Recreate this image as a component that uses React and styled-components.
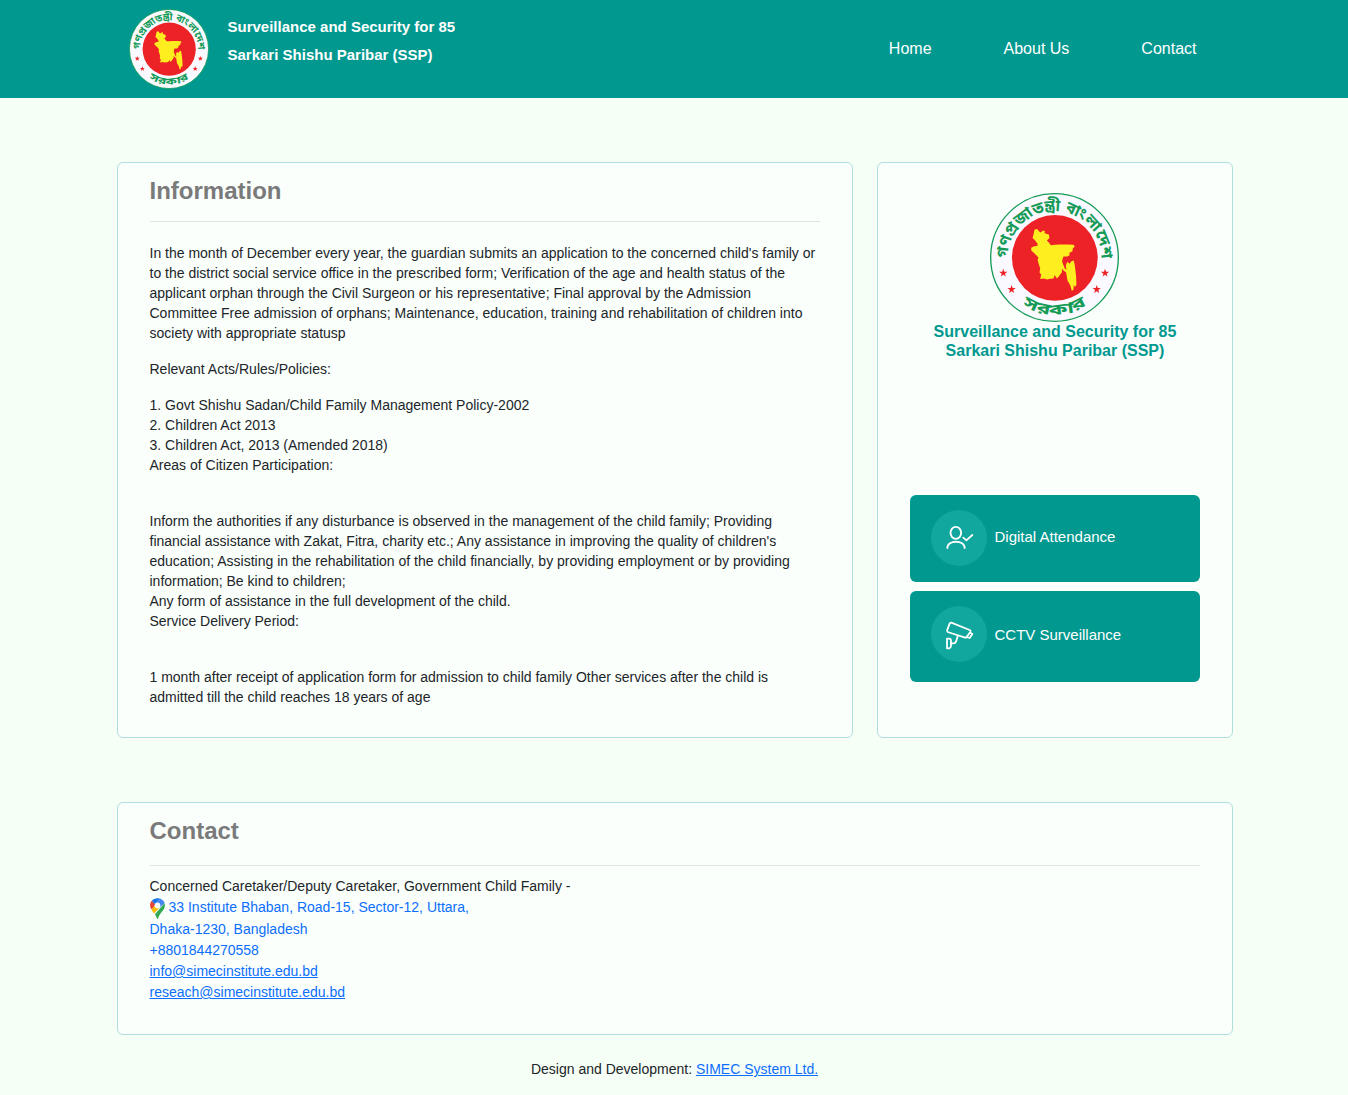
import React from "react";
import styled, { createGlobalStyle } from "styled-components";

const Global = createGlobalStyle`
  *, *::before, *::after { box-sizing: border-box; }
  body {
    margin: 0;
    background: #f5fff6;
    color: #212529;
    font: 14px/20px "Liberation Sans", Arial, sans-serif;
  }
  p, h1, h2, ol { margin: 0; padding: 0; }
`;

const Header = styled.header`
  height: 98px;
  background: #01988f;
  display: flex;
  justify-content: center;
`;

const HeaderInner = styled.div`
  width: 1090px;
  padding: 9px 22px 0 0;
  display: flex;
  justify-content: space-between;
`;

const Brand = styled.div`
  display: flex;
  gap: 18.5px;
`;

const BrandName = styled.h1`
  padding-top: 4px;
  font-size: 15px;
  line-height: 28px;
  font-weight: 700;
  color: #fff;
`;

const Nav = styled.nav`
  display: flex;
  gap: 72px;
  padding: 28px 0.5px 0 0;
`;

const NavLink = styled.a`
  color: #fff;
  font-size: 16px;
  line-height: 24px;
  text-decoration: none;
`;

const Page = styled.main`
  width: 1116px;
  margin: 64px 0 0 117px;
`;

const Columns = styled.div`
  display: grid;
  grid-template-columns: 736px 356px;
  gap: 24px;
  margin-bottom: 64px;
`;

const Card = styled.section`
  height: ${(p) => p.$height}px;
  padding: ${(p) => p.$top || 13}px 32px 0 31.5px;
  border: 1px solid #afdedd;
  border-radius: 6px;
  background: #fafffc;
`;

const CardTitle = styled.h2`
  height: ${(p) => p.$height}px;
  border-bottom: 1px solid #dfe3e1;
  color: #7a7a7a;
  font-size: 24px;
  line-height: 29px;
  font-weight: 700;
`;

const Copy = styled.div`
  padding-top: 21px;
`;

const Para = styled.p`
  margin-bottom: ${(p) => p.$gap || 16}px;
`;

const SideCard = styled(Card)`
  padding-left: 32px;
  display: flex;
  flex-direction: column;
  align-items: center;
`;

const SideName = styled.h2`
  height: 173px;
  color: #01988f;
  font-size: 16px;
  line-height: 19px;
  font-weight: 700;
  text-align: center;
`;

const Service = styled.a`
  width: 290px;
  height: ${(p) => p.$height}px;
  margin-bottom: 9px;
  padding: 15px 21px 0;
  display: flex;
  gap: 7.5px;
  border-radius: 6px;
  background: #01988f;
  color: #fff;
  font-size: 15px;
  text-decoration: none;
`;

const IconDisc = styled.span`
  width: 56px;
  height: 56px;
  border-radius: 50%;
  background: #11a69e;
`;

const ServiceLabel = styled.span`
  padding-top: ${(p) => p.$drop}px;
  line-height: 20px;
`;

const ContactList = styled.div`
  padding-top: 10px;
  line-height: 21px;
  display: flex;
  flex-direction: column;
  align-items: flex-start;
`;

const Address = styled.a`
  color: #0d6efd;
  text-decoration: none;
`;

const PlaceLine = styled.span`
  height: 22px;
  display: flex;
  align-items: flex-start;
  gap: 4px;
`;

const Link = styled.a`
  color: #0d6efd;
  text-decoration: underline;
`;

const Footer = styled.footer`
  margin-top: 24px;
  padding-left: 1px;
  text-align: center;
`;

const EmblemArt = styled.svg`
  flex: none;
  margin-right: ${(p) => p.$shift || 0}px;
`;

const PinArt = styled.svg`
  margin-top: 1px;
`;

const star = (cx, cy, r) =>
  Array.from({ length: 10 }, (_, i) => {
    const a = (Math.PI * i) / 5 - Math.PI / 2;
    const k = i % 2 ? r * 0.4 : r;
    return `${(cx + k * Math.cos(a)).toFixed(1)},${(cy + k * Math.sin(a)).toFixed(1)}`;
  }).join(" ");

function Emblem({ size, id, shift }) {
  return (
    <EmblemArt width={size} height={size} $shift={shift} viewBox="29 23 388 388">
      <defs>
        <path id={`${id}-top`} d="M84,242 A141,141 0 1 1 362,242" />
        <path id={`${id}-bottom`} d="M67,288 A171,171 0 0 0 379,288" />
      </defs>
      <circle cx="223" cy="217" r="192" fill="#f9f9ff" stroke="#159b56" strokeWidth="4" />
      <circle cx="224" cy="218" r="129" fill="#ed2227" />
      <path
        fill="#ffee1f"
        d="M163,133 171,131 176,138 182,142 188,136 194,137 193,144 206,148 208,158 200,166 206,172 212,180 225,179 240,178 262,178 280,179 284,184 278,190 277,198 268,203 268,210 262,214 250,214 247,222 246,230 250,240 254,250 259,254 257,240 262,230 268,236 274,228 281,226 284,240 286,256 288,276 289,300 284,306 281,298 280,314 275,317 270,300 262,286 258,262 250,256 246,250 245,262 240,268 236,274 230,280 224,270 220,280 210,281 200,283 192,280 180,282 183,268 178,262 180,250 176,238 172,224 175,218 166,208 160,202 153,196 153,188 160,184 172,182 172,176 165,166 157,158 160,148z"
      />
      {[[69, 264], [94, 313], [375, 264], [350, 313]].map(([x, y]) => (
        <polygon key={`${x}-${y}`} points={star(x, y, 13)} fill="#ed2227" />
      ))}
      <g fill="#159b56" fontFamily="'Noto Sans Bengali', 'Lohit Bengali', FreeSans, sans-serif" fontWeight="700">
        <text fontSize="48" textLength="446" lengthAdjust="spacingAndGlyphs">
          <textPath href={`#${id}-top`} startOffset="23">গণপ্রজাতন্ত্রী বাংলাদেশ</textPath>
        </text>
        <text fontSize="46" textLength="204" lengthAdjust="spacingAndGlyphs" textAnchor="middle">
          <textPath href={`#${id}-bottom`} startOffset="50%">সরকার</textPath>
        </text>
      </g>
    </EmblemArt>
  );
}

function PersonCheck() {
  return (
    <svg width="56" height="56" viewBox="0 0 168 168" fill="none" stroke="#fff" strokeWidth="5.6" strokeLinecap="round" strokeLinejoin="round">
      <ellipse cx="74.500" cy="68.500" rx="16" ry="18" />
      <path d="M49,114 C49,89 101,89 101,114" />
      <path d="M97,83 L106,91 L124,75" />
    </svg>
  );
}

function Camera() {
  return (
    <svg width="56" height="56" viewBox="0 0 168 168" fill="none" stroke="#fff" strokeWidth="5.4" strokeLinecap="round" strokeLinejoin="round">
      <path d="M61,50 L116,72 Q120,74 118,78 L107,93 Q104,96 100,94 L50,78 Q47,76 49,71 L56,53 Q57,49 61,50Z" />
      <path d="M118,80 L124,84 L116,96 L107,93" />
      <path d="M48,98 H54 Q60,98 60,104 V119 Q60,125 54,127 H48Z" />
      <path d="M60,112 H68 Q73,112 75,107 L80,91" />
    </svg>
  );
}

function MapPin() {
  return (
    <PinArt width="15" height="21" viewBox="0 0 15 21">
      <path fill="#34a853" d="M14.600,5 C16,10 12.500,13 10.500,15.500 C8.500,18 8.300,21 7.500,21 C6.700,21 6.500,18.500 5,16.200Z" />
      <path fill="#fbbc04" d="M1.500,11.500 L5.500,6.500 L9.700,9.500 L4,15.500 C3,14 2,12.800 1.500,11.500Z" />
      <path fill="#ea4335" d="M1.800,2.700 L5.500,6.500 L1.500,11.500 C-.6,8.500 -.3,5 1.800,2.700Z" />
      <path fill="#1a73e8" d="M1.800,2.700 C3.500,.6 6.500,-.4 9.800,.4 L5.300,6.800Z" />
      <path fill="#4285f4" d="M9.800,.4 C12,1.100 13.800,2.800 14.600,5 L9.800,9.400 L5.300,6.800Z" />
      <circle cx="7.500" cy="7.400" r="2.800" fill="#fff" />
    </PinArt>
  );
}

export default function App() {
  return (
    <>
      <Global />
      <Header>
        <HeaderInner>
          <Brand>
            <Emblem size={80} id="head" />
            <BrandName>
              Surveillance and Security for 85
              <br />
              Sarkari Shishu Paribar (SSP)
            </BrandName>
          </Brand>
          <Nav>
            <NavLink>Home</NavLink>
            <NavLink>About Us</NavLink>
            <NavLink>Contact</NavLink>
          </Nav>
        </HeaderInner>
      </Header>
      <Page>
        <Columns>
          <Card $height={576}>
            <CardTitle $height={46}>Information</CardTitle>
            <Copy>
              <Para>
                In the month of December every year, the guardian submits an application to the concerned child's family or to the district social service office in the prescribed form; Verification of the age and health status of the applicant orphan through the Civil Surgeon or his representative; Final approval by the Admission Committee Free admission of orphans; Maintenance, education, training and rehabilitation of children into society with appropriate statusp
              </Para>
              <Para>Relevant Acts/Rules/Policies:</Para>
              <Para $gap={36}>
                1. Govt Shishu Sadan/Child Family Management Policy-2002
                <br />
                2. Children Act 2013
                <br />
                3. Children Act, 2013 (Amended 2018)
                <br />
                Areas of Citizen Participation:
              </Para>
              <Para $gap={36}>
                Inform the authorities if any disturbance is observed in the management of the child family; Providing financial assistance with Zakat, Fitra, charity etc.; Any assistance in improving the quality of children's education; Assisting in the rehabilitation of the child financially, by providing employment or by providing information; Be kind to children;
                <br />
                Any form of assistance in the full development of the child.
                <br />
                Service Delivery Period:
              </Para>
              <Para>
                1 month after receipt of application form for admission to child family Other services after the child is admitted till the child reaches 18 years of age
              </Para>
            </Copy>
          </Card>
          <SideCard $height={576} $top={30}>
            <Emblem size={129} id="side" shift={1} />
            <SideName>
              Surveillance and Security for 85
              <br />
              Sarkari Shishu Paribar (SSP)
            </SideName>
            <Service $height={87}>
              <IconDisc><PersonCheck /></IconDisc>
              <ServiceLabel $drop={17}>Digital Attendance</ServiceLabel>
            </Service>
            <Service $height={91}>
              <IconDisc><Camera /></IconDisc>
              <ServiceLabel $drop={19}>CCTV Surveillance</ServiceLabel>
            </Service>
          </SideCard>
        </Columns>
        <Card $height={233}>
          <CardTitle $height={50}>Contact</CardTitle>
          <ContactList>
            <span>Concerned Caretaker/Deputy Caretaker, Government Child Family -</span>
            <Address>
              <PlaceLine>
                <MapPin />
                33 Institute Bhaban, Road-15, Sector-12, Uttara,
              </PlaceLine>
              Dhaka-1230, Bangladesh
            </Address>
            <Address>+8801844270558</Address>
            <Link>info@simecinstitute.edu.bd</Link>
            <Link>reseach@simecinstitute.edu.bd</Link>
          </ContactList>
        </Card>
      </Page>
      <Footer>
        Design and Development: <Link>SIMEC System Ltd.</Link>
      </Footer>
    </>
  );
}
